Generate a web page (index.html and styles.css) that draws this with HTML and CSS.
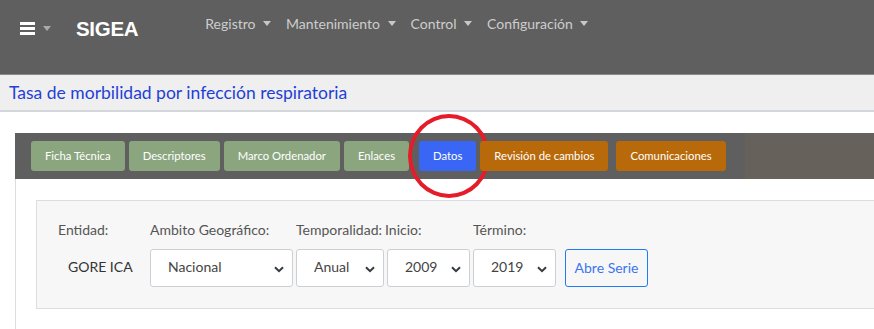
FILE: index.html
```html
<!DOCTYPE html>
<html lang="es">
<head>
<meta charset="utf-8">
<title>SIGEA</title>
<link rel="stylesheet" href="styles.css">
</head>
<body>
<header class="navbar">
  <div class="menu-toggle">
    <svg class="burger" width="15" height="13" viewBox="0 0 15 13"><rect x="0" y="0" width="15" height="3" fill="#fff"/><rect x="0" y="5" width="15" height="3" fill="#fff"/><rect x="0" y="10" width="15" height="3" fill="#fff"/></svg>
    <span class="caret caret-light"></span>
  </div>
  <div class="brand">SIGEA</div>
  <nav class="nav-links">
    <span class="nav-item">Registro <span class="caret"></span></span>
    <span class="nav-item">Mantenimiento <span class="caret"></span></span>
    <span class="nav-item">Control <span class="caret"></span></span>
    <span class="nav-item">Configuración <span class="caret"></span></span>
  </nav>
</header>
<div class="title-bar">Tasa de morbilidad por infección respiratoria</div>
<main class="main">
  <div class="tabs">
    <div class="tab-group">
      <span class="tab tab-green">Ficha Técnica</span>
      <span class="tab tab-green">Descriptores</span>
      <span class="tab tab-green">Marco Ordenador</span>
      <span class="tab tab-green">Enlaces</span>
      <span class="tab tab-blue">Datos<span class="highlight"></span></span>
      <span class="tab tab-orange">Revisión de cambios</span>
      <span class="tab tab-orange tab-last">Comunicaciones</span>
    </div>
    <div class="tab-fill"></div>
  </div>
  <div class="content">
    <div class="panel">
      <div class="labels">
        <span class="lbl lbl-ent">Entidad:</span>
        <span class="lbl lbl-amb">Ambito Geográfico:</span>
        <span class="lbl lbl-tmp">Temporalidad:</span>
        <span class="lbl lbl-ini">Inicio:</span>
        <span class="lbl lbl-ter">Término:</span>
      </div>
      <div class="controls">
        <span class="entity">GORE ICA</span>
        <div class="select sel-amb"><span>Nacional</span><svg width="10" height="7" viewBox="0 0 10 7"><path d="M1 1.2 L5 5.2 L9 1.2" fill="none" stroke="#343a40" stroke-width="2"/></svg></div>
        <div class="select sel-tmp"><span>Anual</span><svg width="10" height="7" viewBox="0 0 10 7"><path d="M1 1.2 L5 5.2 L9 1.2" fill="none" stroke="#343a40" stroke-width="2"/></svg></div>
        <div class="select sel-year"><span>2009</span><svg width="10" height="7" viewBox="0 0 10 7"><path d="M1 1.2 L5 5.2 L9 1.2" fill="none" stroke="#343a40" stroke-width="2"/></svg></div>
        <div class="select sel-year"><span>2019</span><svg width="10" height="7" viewBox="0 0 10 7"><path d="M1 1.2 L5 5.2 L9 1.2" fill="none" stroke="#343a40" stroke-width="2"/></svg></div>
        <span class="btn-outline">Abre Serie</span>
      </div>
    </div>
  </div>
</main>
</body>
</html>
```
FILE: styles.css
```css
* { box-sizing: border-box; }
html, body { margin: 0; padding: 0; }
body {
  width: 874px;
  height: 329px;
  overflow: hidden;
  background: #fff;
  font-family: Lato, "Open Sans", sans-serif;
  color: #555;
}
.navbar {
  height: 75px;
  background: #5f5f5f;
  border-bottom: 1px solid #8a8a8a;
  display: flex;
  align-items: flex-start;
  padding-top: 17px;
}
.menu-toggle {
  display: flex;
  align-items: center;
  margin-left: 20px;
  margin-top: 5px;
  height: 13px;
}
.burger { display: block; }
.caret {
  display: inline-block;
  width: 0; height: 0;
  border-left: 4px solid transparent;
  border-right: 4px solid transparent;
  border-top: 5px solid #c8c8c8;
  vertical-align: 3px;
  margin-left: 4px;
}
.caret-light { border-top-color: #aaa; margin-left: 8px; border-left-width: 4.5px; border-right-width: 4.5px; }
.brand {
  font-family: "Liberation Sans", Arial, sans-serif;
  font-size: 20.5px;
  font-weight: bold;
  color: #fff;
  margin-left: 25px;
  line-height: 24px;
  letter-spacing: -0.3px;
}
.nav-links {
  display: flex;
  gap: 15px;
  margin-left: 67px;
  margin-top: -3px;
}
.nav-item {
  font-size: 14px;
  color: #cdcdcd;
  line-height: 20px;
}
.title-bar {
  height: 37px;
  background: #efefef;
  border-bottom: 2px solid #d3d6da;
  color: #1f3fd6;
  font-size: 17.5px;
  padding-left: 9px;
  line-height: 36px;
}
.main {
  padding-top: 21px;
  padding-left: 15px;
}
.tabs {
  display: flex;
  height: 46px;
}
.tab-group {
  display: flex;
  align-items: center;
  gap: 4px;
  background: #5f5f5f;
  padding-left: 16px;
  padding-right: 19px;
}
.tab-fill { flex: 1; background: #66615b; }
.tab {
  height: 30px;
  display: flex;
  align-items: center;
  padding: 0 14px 2px;
  border-radius: 3px;
  color: #fff;
  font-size: 11.3px;
  position: relative;
}
.tab-green { background: #8ba67f; }
.tab-blue { background: #3a66f6; margin-left: 6px; }
.tab-orange { background: #b8690a; }
.tab-last { margin-left: 4px; }
.highlight {
  position: absolute;
  left: -11px;
  top: -27px;
  width: 82px;
  height: 84px;
  border: 4.5px solid #e51d2a;
  border-radius: 50%;
}
.content {
  border-left: 1px solid #dcdcdc;
  padding-top: 21px;
  padding-left: 20px;
  height: 160px;
}
.panel {
  background: #f7f7f7;
  border: 1px solid #dcdde1;
  border-right: none;
  height: 109px;
  padding-top: 19px;
}
.labels {
  display: flex;
  font-size: 14px;
  color: #555;
  height: 20px;
  line-height: 20px;
}
.lbl-ent { margin-left: 21px; width: 92px; }
.lbl-amb { width: 146px; }
.lbl-tmp { width: 89px; }
.lbl-ini { width: 88px; }
.controls {
  display: flex;
  align-items: center;
  margin-top: 9px;
  height: 38px;
}
.entity {
  width: 113px;
  padding-left: 31px;
  padding-bottom: 3px;
  font-size: 14px;
  color: #333;
}
.select {
  height: 38px;
  background: #fff;
  border: 1px solid #ccd0d5;
  border-radius: 3px;
  display: flex;
  align-items: center;
  justify-content: space-between;
  font-size: 14px;
  color: #444;
  padding-right: 8px;
  padding-bottom: 3px;
  margin-right: 3px;
}
.select svg { margin-top: 5px; }
.sel-amb { width: 143px; padding-left: 17px; }
.sel-tmp { width: 88px; padding-left: 17px; }
.sel-year { width: 83px; padding-left: 17px; }
.btn-outline {
  margin-left: 6px;
  height: 38px;
  width: 83px;
  border: 1px solid #1f7cf5;
  border-radius: 3px;
  display: flex;
  align-items: center;
  justify-content: center;
  padding-bottom: 2px;
  color: #3c74f0;
  font-size: 14px;
}
```
